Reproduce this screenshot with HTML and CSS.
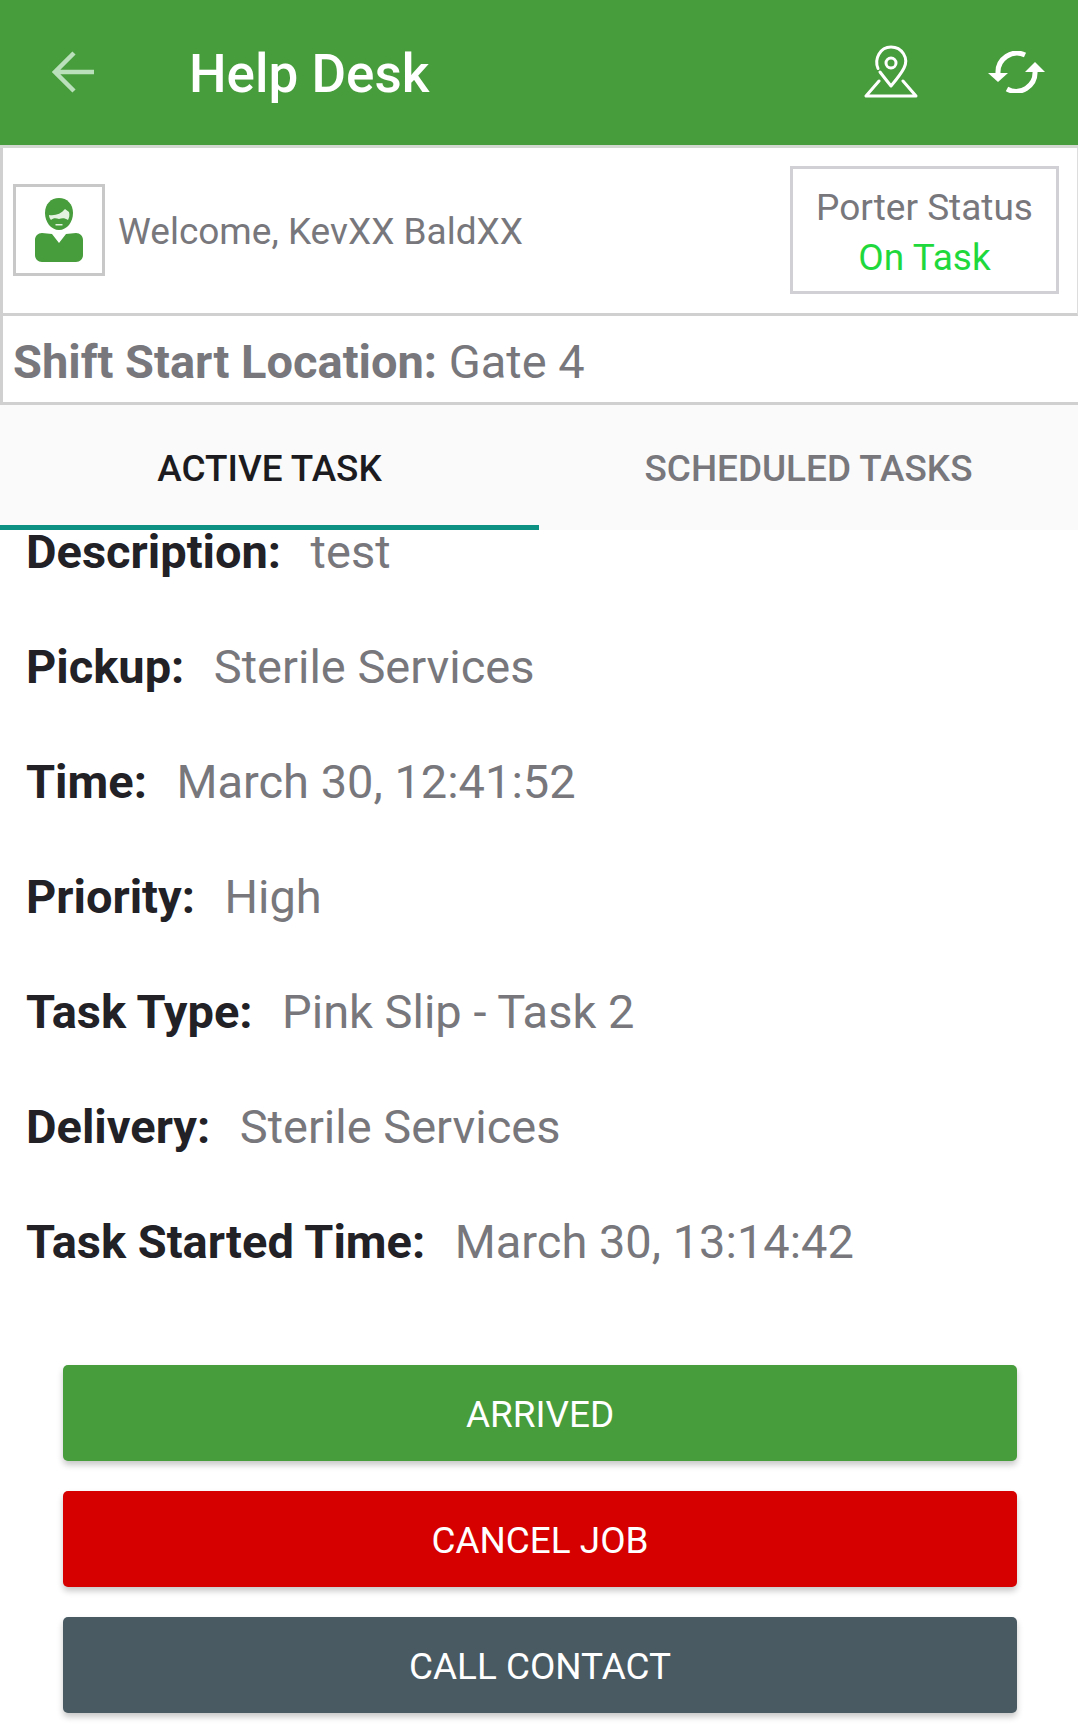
FILE: index.html
```html
<!DOCTYPE html>
<html lang="en">
<head>
    <meta charset="UTF-8">
    <meta name="viewport" content="width=device-width, initial-scale=1.0">
    <title>Help Desk</title>
    <link rel="stylesheet" href="styles.css">
</head>
<body>

    <div class="app-bar">
        <svg class="back-icon" width="44" height="44" viewBox="0 0 44 44" fill="none">
            <path d="M42 22H3M22 3L3 22l19 19" stroke="#b9e0bb" stroke-width="4.5"/>
        </svg>
        <span class="app-title">Help Desk</span>
        <svg class="pin-icon" width="54" height="54" viewBox="0 0 54 54" fill="none" stroke="#fff" stroke-width="3" stroke-linejoin="round" stroke-linecap="round">
            <path d="M14 23.5C10 14 16 2 27 2c11 0 18 11 13 21-3 6-8 12-13 18-4-5-8-10-11-14"/>
            <circle cx="27" cy="18" r="5"/>
            <path d="M15 36L2 51h50L39 36"/>
        </svg>
        <svg class="sync-icon" width="57" height="42" viewBox="0 0 57 42" fill="none">
            <path d="M10 22A19 19 0 0 1 37 4" stroke="#fff" stroke-width="5"/>
            <path d="M0 22h20l-10 9z" fill="#fff"/>
            <path d="M47 20A19 19 0 0 1 19 38" stroke="#fff" stroke-width="5"/>
            <path d="M37 21L47 11l10 10z" fill="#fff"/>
        </svg>
    </div>

    <div class="user-row">
        <div class="avatar">
            <svg width="48" height="64" viewBox="0 0 48 64" fill="#479c3b">
                <path d="M24 0c8 0 14 6 14 15s-6 17-14 17-14-8-14-17S16 0 24 0z"/>
                <path d="M14 17c6 1 12-1 16-6l4 3c1 3 0 6-1 8-3-2-6-2-9-1-3-1-6-1-8 1-1-1-2-3-2-5z" fill="#e4f2e2"/>
                <path d="M20.500 26h7v1.500h-7z" fill="#e4f2e2"/>
                <path d="M7 35l10 1 7 9 7-9 10-1c4 0 7 3 7 7v15c0 4-3 7-7 7H7c-4 0-7-3-7-7V42c0-4 3-7 7-7z"/>
            </svg>
        </div>
        <span class="welcome">Welcome, KevXX BaldXX</span>
        <div class="porter-status">
            <div>Porter Status</div>
            <div class="status-value">On Task</div>
        </div>
    </div>

    <div class="location-row"><b>Shift Start Location:</b> Gate 4</div>

    <div class="tabs">
        <div class="tab active">ACTIVE TASK</div>
        <div class="tab">SCHEDULED TASKS</div>
    </div>

    <div class="task-details">
        <div class="detail-row"><b>Description:</b><span>test</span></div>
        <div class="detail-row"><b>Pickup:</b><span>Sterile Services</span></div>
        <div class="detail-row"><b>Time:</b><span>March 30, 12:41:52</span></div>
        <div class="detail-row"><b>Priority:</b><span>High</span></div>
        <div class="detail-row"><b>Task Type:</b><span>Pink Slip - Task 2</span></div>
        <div class="detail-row"><b>Delivery:</b><span>Sterile Services</span></div>
        <div class="detail-row"><b>Task Started Time:</b><span>March 30, 13:14:42</span></div>
    </div>

    <div class="actions">
        <button class="btn btn-green">ARRIVED</button>
        <button class="btn btn-red">CANCEL JOB</button>
        <button class="btn btn-slate">CALL CONTACT</button>
    </div>

</body>
</html>
```

FILE: styles.css
```css
html, body {
    margin: 0;
    height: 1727px;
    overflow: hidden;
}
body {
    font-family: Roboto, sans-serif;
    background-color: #fff;
    color: #77777c;
}
.app-bar {
    display: flex;
    align-items: center;
    height: 148px;
    box-sizing: border-box;
    padding-top: 2px;
    background-color: #479c3b;
    border-bottom: 3px solid #d3d8d0;
    color: #fff;
}
.back-icon {
    margin-left: 52px;
    margin-bottom: 3px;
}
.app-title {
    margin-left: 93px;
    font-size: 53px;
    font-weight: 500;
}
.pin-icon {
    margin-left: auto;
    margin-right: -2px;
    margin-bottom: 4px;
}
.sync-icon {
    margin-left: 72px;
    margin-right: 33px;
    margin-bottom: 4px;
}
.user-row {
    display: flex;
    align-items: center;
    height: 168px;
    box-sizing: border-box;
    border-left: 3px solid #d0d0d0;
    border-right: 1px solid #ddd;
    border-bottom: 3px solid #d0d0d0;
    padding-left: 10px;
    padding-right: 18px;
    padding-bottom: 2px;
}
.avatar {
    display: flex;
    align-items: center;
    justify-content: center;
    width: 92px;
    height: 92px;
    box-sizing: border-box;
    border: 3px solid #c8c8c8;
}
.welcome {
    margin-left: 13px;
    padding-top: 3px;
    font-size: 37px;
}
.porter-status {
    margin-left: auto;
    width: 269px;
    height: 128px;
    box-sizing: border-box;
    border: 3px solid #d0d0d5;
    padding-top: 5px;
    display: flex;
    flex-direction: column;
    justify-content: center;
    align-items: center;
    gap: 7px;
    font-size: 37px;
}
.status-value {
    color: #1fd93c;
}
.location-row {
    height: 89px;
    box-sizing: border-box;
    line-height: 86px;
    border-left: 3px solid #d0d0d0;
    border-bottom: 3px solid #d0d0d0;
    padding-left: 10px;
    padding-top: 3px;
    font-size: 47px;
}
.location-row b {
    font-weight: 700;
}
.tabs {
    display: flex;
    height: 125px;
    background-color: #fafafb;
}
.tab {
    flex: 1;
    display: flex;
    align-items: center;
    justify-content: center;
    box-sizing: border-box;
    padding-top: 7px;
    font-size: 36.9px;
    font-weight: 500;
    border-bottom: 5px solid transparent;
}
.tab.active {
    color: #1c1c20;
    border-bottom-color: #0c9182;
}
.task-details {
    padding-left: 26px;
    margin-top: -8px;
}
.detail-row {
    display: flex;
    gap: 29.5px;
    height: 115px;
    line-height: 59px;
    font-size: 47px;
}
.detail-row b {
    font-weight: 700;
    color: #212126;
}
.actions {
    display: flex;
    flex-direction: column;
    gap: 30px;
    padding: 0 61px 0 63px;
    margin-top: 38px;
}
.btn {
    height: 96px;
    border: none;
    border-radius: 5px;
    padding-top: 3px;
    color: #fff;
    font-family: Roboto, sans-serif;
    font-size: 36.9px;
    box-shadow: 0 4px 6px rgba(0, 0, 0, 0.22);
}
.btn-green {
    background-color: #479c3b;
}
.btn-red {
    background-color: #d60000;
}
.btn-slate {
    background-color: #495a63;
}
```
